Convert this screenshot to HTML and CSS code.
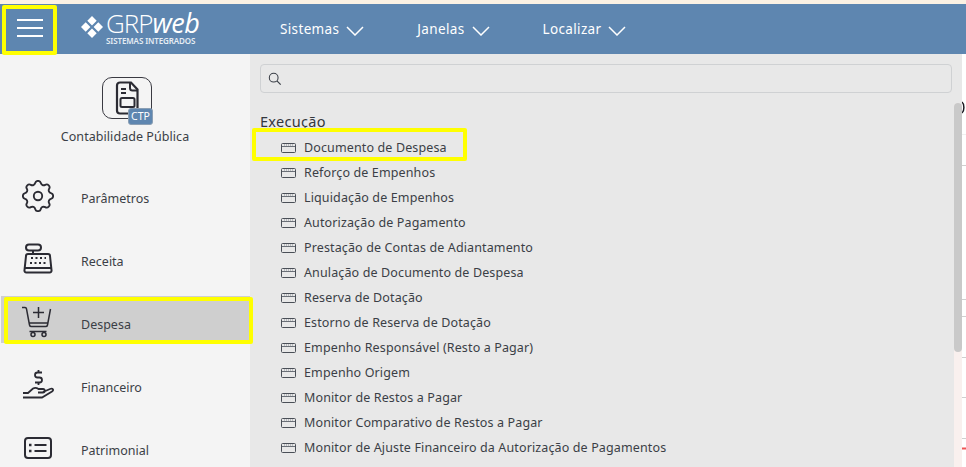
FILE: index.html
```html
<!DOCTYPE html>
<html lang="pt-BR">
<head>
<meta charset="utf-8">
<title>GRPweb</title>
<link rel="stylesheet" href="styles.css">
</head>
<body>
<svg class="defs" width="0" height="0" aria-hidden="true">
  <symbol id="win" viewBox="0 0 15 10">
    <rect x=".5" y=".5" width="14" height="9" rx="1" fill="none" stroke="#4a4f57"/>
    <path d="M1 3.500h13" stroke="#6a6f77"/>
    <path d="M3 2h1M5 2h1M7 2h1M9 2h1M11 2h1" stroke="#8a8f96"/>
  </symbol>
  <symbol id="chev" viewBox="0 0 18 10">
    <path d="M1 1l8 8 8-8" fill="none" stroke="#fff" stroke-width="1.500"/>
  </symbol>
</svg>
<div class="page">
  <div class="topstrip"></div>
  <header class="header">
    <button class="burger" aria-label="Menu"><span></span><span></span><span></span></button>
    <div class="logo">
      <svg class="logo-mark" viewBox="0 0 24 24" aria-hidden="true">
        <path fill="#fff" d="M12 1l4.700 4.700L12 10.400 7.300 5.700zM5.700 7.300L10.400 12l-4.700 4.700L1 12zM18.300 7.300L23 12l-4.700 4.700L13.600 12zM12 13.600l4.700 4.700L12 23l-4.700-4.700z"/>
      </svg>
      <div class="logo-text">
        <div class="logo-name">GRP<em>web</em></div>
        <div class="logo-sub">SISTEMAS INTEGRADOS</div>
      </div>
    </div>
    <nav class="nav">
      <a class="nav-item">Sistemas <svg class="chev"><use href="#chev"/></svg></a>
      <a class="nav-item">Janelas <svg class="chev"><use href="#chev"/></svg></a>
      <a class="nav-item">Localizar <svg class="chev"><use href="#chev"/></svg></a>
    </nav>
  </header>
  <main class="main">
    <aside class="sidebar">
      <div class="system">
        <div class="system-icon">
          <svg class="doc" viewBox="0 0 24 34" aria-hidden="true">
            <path d="M5 1.500h11l6.500 7v21a3 3 0 0 1-3 3H5a3 3 0 0 1-3-3v-25a3 3 0 0 1 3-3z" fill="none" stroke="#2b2b33" stroke-width="2.200"/>
            <path d="M15 2v5a2.500 2.500 0 0 0 2.500 2.500H22M6 8h5M6 12h5" fill="none" stroke="#2b2b33" stroke-width="2"/>
            <rect x="5.500" y="17" width="14" height="9" rx="1.500" fill="none" stroke="#2b2b33" stroke-width="2"/>
          </svg>
          <span class="badge">CTP</span>
        </div>
        <div class="system-name">Contabilidade Pública</div>
      </div>
      <a class="side-item">
        <svg class="side-icon" viewBox="2.500 2.500 19 19" aria-hidden="true"><path fill="none" stroke="#2b2b33" stroke-width="1.100" d="M10.325 4.317c.426-1.756 2.924-1.756 3.350 0a1.724 1.724 0 0 0 2.573 1.066c1.543-.94 3.310.826 2.370 2.370a1.724 1.724 0 0 0 1.065 2.572c1.756.426 1.756 2.924 0 3.350a1.724 1.724 0 0 0-1.066 2.573c.94 1.543-.826 3.310-2.370 2.370a1.724 1.724 0 0 0-2.572 1.065c-.426 1.756-2.924 1.756-3.350 0a1.724 1.724 0 0 0-2.573-1.066c-1.543.94-3.310-.826-2.370-2.370a1.724 1.724 0 0 0-1.065-2.572c-1.756-.426-1.756-2.924 0-3.350a1.724 1.724 0 0 0 1.066-2.573c-.94-1.543.826-3.310 2.370-2.370 1 .608 2.296.07 2.572-1.065z"/><circle cx="12" cy="12" r="2.500" fill="none" stroke="#2b2b33" stroke-width="1.100"/></svg>
        <span class="side-label">Parâmetros</span>
      </a>
      <a class="side-item">
        <svg class="side-icon" viewBox="0 0 32 32" aria-hidden="true"><g fill="none" stroke="#2b2b33" stroke-width="2"><rect x="4" y="1.500" width="15" height="6" rx="3"/><path d="M11 8v3M6 11h20a2 2 0 0 1 2 2l1.500 14a2 2 0 0 1-2 2.500H4.500a2 2 0 0 1-2-2.500L4 13a2 2 0 0 1 2-2zM3 25h26"/></g><path stroke="#2b2b33" stroke-width="2" stroke-dasharray="2 2.500" d="M9 15h15M8 20h16"/></svg>
        <span class="side-label">Receita</span>
      </a>
      <a class="side-item active">
        <svg class="side-icon" viewBox="0 0 32 32" aria-hidden="true"><g fill="none" stroke="#2b2b33" stroke-width="1.500"><path d="M0 1.500h3a1.500 1.500 0 0 1 1.500 1.300L7.500 19a2 2 0 0 0 2 1.600h14a2 2 0 0 0 2-1.600L28.500 3M7.500 17h18.500M7.500 25.500h17M16.500 1v11M11 6.500h11"/><circle cx="11" cy="28.500" r="2"/><circle cx="22" cy="28.500" r="2"/></g></svg>
        <span class="side-label">Despesa</span>
      </a>
      <a class="side-item">
        <svg class="side-icon" viewBox="0 0 32 32" aria-hidden="true"><g fill="none" stroke="#2b2b33" stroke-width="1.800"><path d="M20 3.500h-4.500a2.500 2.500 0 0 0 0 5h2a2.500 2.500 0 0 1 0 5H13M16.500 1v2.500M16.500 13.500V16"/><path d="M1 24h5l5-4.500c2-1 4-.5 5.500.5H21a1.500 1.500 0 0 1 0 3.500h-5M21 23l7-3c3-1 4 1 2 2.500L20 28.500H1"/></g></svg>
        <span class="side-label">Financeiro</span>
      </a>
      <a class="side-item">
        <svg class="side-icon" viewBox="0 0 32 32" aria-hidden="true"><g fill="none" stroke="#2b2b33" stroke-width="2"><rect x="3" y="6" width="26" height="20" rx="3"/><path d="M12.500 13h12M12.500 19h12"/></g><path stroke="#2b2b33" stroke-width="2.500" d="M7 13h2.500M7 19h2.500"/></svg>
        <span class="side-label">Patrimonial</span>
      </a>
    </aside>
    <section class="panel">
      <div class="search">
        <svg class="search-icon" viewBox="0 0 16 16" aria-hidden="true"><circle cx="6.500" cy="6.500" r="5" fill="none" stroke="#3a3f47" stroke-width="1.200"/><path d="M10.200 10.200l4.300 4.300" stroke="#3a3f47" stroke-width="1.400"/></svg>
      </div>
      <div class="content">
        <div class="list">
          <h2 class="group">Execução</h2>
          <a class="row"><svg class="win"><use href="#win"/></svg>Documento de Despesa</a>
          <a class="row"><svg class="win"><use href="#win"/></svg>Reforço de Empenhos</a>
          <a class="row"><svg class="win"><use href="#win"/></svg>Liquidação de Empenhos</a>
          <a class="row"><svg class="win"><use href="#win"/></svg>Autorização de Pagamento</a>
          <a class="row"><svg class="win"><use href="#win"/></svg>Prestação de Contas de Adiantamento</a>
          <a class="row"><svg class="win"><use href="#win"/></svg>Anulação de Documento de Despesa</a>
          <a class="row"><svg class="win"><use href="#win"/></svg>Reserva de Dotação</a>
          <a class="row"><svg class="win"><use href="#win"/></svg>Estorno de Reserva de Dotação</a>
          <a class="row"><svg class="win"><use href="#win"/></svg>Empenho Responsável (Resto a Pagar)</a>
          <a class="row"><svg class="win"><use href="#win"/></svg>Empenho Origem</a>
          <a class="row"><svg class="win"><use href="#win"/></svg>Monitor de Restos a Pagar</a>
          <a class="row"><svg class="win"><use href="#win"/></svg>Monitor Comparativo de Restos a Pagar</a>
          <a class="row"><svg class="win"><use href="#win"/></svg>Monitor de Ajuste Financeiro da Autorização de Pagamentos</a>
        </div>
        <div class="scrollbar"><div class="thumb"></div></div>
      </div>
    </section>
    <svg class="backdrop" viewBox="0 0 4 413" aria-hidden="true">
      <path d="M0 48c2.500 2 2.500 9 0 11" fill="none" stroke="#1a1a22" stroke-width="1.500"/>
      <path d="M0 80.500h4" stroke="#f0f0f0"/>
      <path d="M0 111.500h4M0 245.500h4M0 262.500h4M0 303.500h4M0 343.500h4M0 384.500h4" stroke="#cfcfcf"/>
      <path d="M0 394.500h4" stroke="#e55" stroke-width="2"/>
    </svg>
  </main>
  <div class="mark mark-burger"></div>
  <div class="mark mark-doc"></div>
  <div class="mark mark-despesa"></div>
</div>
</body>
</html>
```

FILE: styles.css
```css
* { box-sizing: border-box; }
html, body { margin: 0; height: 100%; overflow: hidden; background: #fff; }
body { font-family: "Noto Sans", "Open Sans", sans-serif; color: #3b3f46; }
a { color: inherit; text-decoration: none; }
.defs { position: absolute; }
.page { position: relative; width: 966px; height: 467px; display: flex; flex-direction: column; overflow: hidden; }
.topstrip { height: 4px; background: #fbf1e3; flex: none; }

.header { height: 50px; flex: none; background: #5e86b0; display: flex; align-items: center; color: #fff; }
.burger { width: 56px; height: 50px; padding: 0 0 2px 3px; border: 0; background: none; display: flex; flex-direction: column; justify-content: center; align-items: center; gap: 6px; }
.burger span { width: 26px; height: 2px; background: #fff; }
.logo { display: flex; align-items: center; margin-left: 24px; width: 200px; gap: 2px; }
.logo-mark { width: 24px; height: 24px; flex: none; margin-bottom: 4px; }
.logo-text { display: flex; flex-direction: column; margin-top: -4px; }
.logo-name { font-family: "Open Sans", sans-serif; font-size: 26px; line-height: 26px; font-weight: 300; letter-spacing: -1px; color: #fff; }
.logo-name em { font-style: italic; font-size: 27px; font-weight: 400; letter-spacing: -.5px; font-family: "Open Sans", sans-serif; }
.logo-sub { font-size: 8px; line-height: 9px; font-weight: 600; letter-spacing: -.1px; color: #e6edf4; white-space: nowrap; }
.nav { display: flex; gap: 53px; }
.nav-item { display: flex; align-items: center; gap: 7px; font-size: 13.500px; letter-spacing: .35px; padding-bottom: 1px; }
.chev { width: 18px; height: 10px; margin-top: 4px; }

.main { flex: 1; display: flex; min-height: 0; }
.sidebar { width: 250px; flex: none; background: #f4f4f4; overflow: hidden; }
.system { height: 116px; padding-top: 23px; display: flex; flex-direction: column; align-items: center; }
.system-icon { position: relative; width: 50px; height: 42px; border: 1px solid #3a3a42; border-radius: 10px; display: flex; justify-content: center; align-items: center; margin-left: 4px; }
.doc { width: 24px; height: 34px; margin-left: -1px; }
.badge { position: absolute; right: -2px; bottom: -7px; width: 25px; height: 17px; background: #5e86b0; border: 1px solid #8b9fb4; border-radius: 3px; color: #fff; font-size: 10.500px; line-height: 15px; text-align: center; }
.system-name { font-size: 12.500px; letter-spacing: .06px; line-height: 18px; margin-top: 9px; }
.side-item { display: flex; align-items: center; height: 47px; margin-bottom: 16px; padding: 4px 0 0 22px; }
.side-item.active { background: #cfcfcf; margin-left: 1px; padding-left: 21px; }
.side-icon { width: 32px; height: 32px; flex: none; }
.side-label { font-size: 12.500px; margin: 5px 0 0 27px; }

.panel { width: 712px; flex: none; background: #e8e8e8; padding: 10px 10px 0; display: flex; flex-direction: column; overflow: hidden; }
.search { height: 29px; flex: none; border: 1px solid #cfd1d3; border-radius: 4px; display: flex; align-items: center; padding-left: 7px; }
.search-icon { width: 14px; height: 14px; }
.content { flex: 1; min-height: 0; display: flex; margin: 10px -10px 0 0; }
.list { flex: 1; overflow: hidden; margin-right: 2px; }
.group { margin: 0 0 2px; padding-top: 6px; font-size: 14.500px; font-weight: 400; line-height: 24px; letter-spacing: .3px; color: #33373d; }
.row { display: flex; align-items: center; height: 25px; padding-left: 21px; font-size: 12.500px; letter-spacing: .13px; white-space: nowrap; }
.win { width: 15px; height: 10px; margin-right: 8px; flex: none; }
.scrollbar { width: 8px; flex: none; background: #f9f0ee; border-radius: 4px 4px 0 0; }
.thumb { height: 249px; background: #c9c9c9; border-radius: 4px; }

.backdrop { width: 4px; height: 413px; flex: none; }

.mark { position: absolute; border: 4px solid #ffff00; pointer-events: none; }
.mark-burger { left: 2px; top: 5px; width: 55px; height: 50px; border-radius: 2px; }
.mark-doc { left: 252px; top: 128px; width: 215px; height: 33px; border-radius: 2px; }
.mark-despesa { left: 4px; top: 297px; width: 249px; height: 47px; border-radius: 2px; }
```
